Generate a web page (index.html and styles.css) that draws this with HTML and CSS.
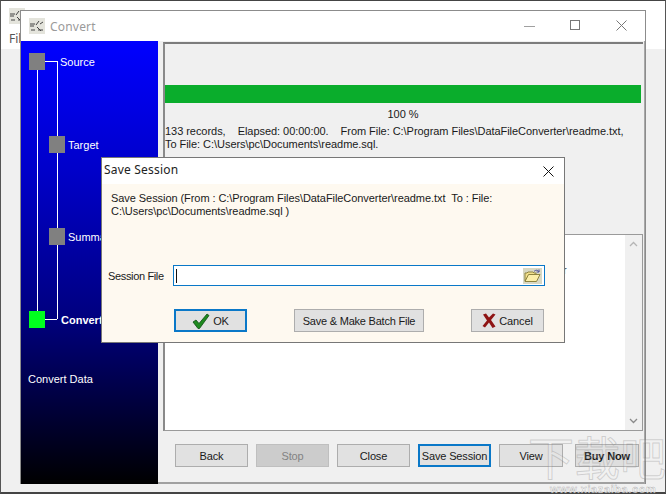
FILE: index.html
```html
<!DOCTYPE html>
<html lang="en">
<head>
<meta charset="utf-8">
<title>Convert</title>
<link rel="stylesheet" href="styles.css">
</head>
<body>
<div class="desktop">
  <div class="main-window">
    <div class="main-head">
      <svg class="app-icon main-icon" viewBox="0 0 16 16"><rect width="16" height="16" fill="#e4e4dc"/><path d="M1 6h5M1 8h4M10 3l-3 4M11 6l3-2M2 12h4M9 12h5M8 9l4 4" stroke="#444" fill="none"/></svg>
      <div class="main-menu">File</div>
    </div>
  </div>

  <div class="convert-window">
    <div class="titlebar">
      <svg class="app-icon" viewBox="0 0 16 16"><rect width="16" height="16" fill="#e4e4dc"/><path d="M1 6h5M1 8h4M10 3l-3 4M11 6l3-2M2 12h4M9 12h5M8 9l4 4" stroke="#444" fill="none"/></svg>
      <span class="title-text">Convert</span>
      <div class="caption-buttons">
        <svg class="caption-icon" viewBox="0 0 12 12"><path d="M0 6.5h11" stroke="#a0a0a0"/></svg>
        <svg class="caption-icon" viewBox="0 0 12 12"><rect x=".5" y=".5" width="9" height="9" fill="none" stroke="#777"/></svg>
        <svg class="caption-icon" viewBox="0 0 12 12"><path d="M.5.5l10 10M10.500.5l-10 10" stroke="#777" fill="none"/></svg>
      </div>
    </div>
    <div class="convert-body">
      <aside class="rail">
        <div class="rail-line line-outer"></div>
        <div class="rail-line line-inner"></div>
        <div class="rail-tick tick-top"></div>
        <div class="rail-tick tick-bottom"></div>
        <div class="step step-source"><i class="node"></i><span>Source</span></div>
        <div class="step step-target"><i class="node"></i><span>Target</span></div>
        <div class="step step-summary"><i class="node"></i><span>Summary</span></div>
        <div class="step step-convert"><i class="node node-active"></i><span>Convert</span></div>
        <div class="rail-caption">Convert Data</div>
      </aside>
      <main class="content">
        <section class="status">
          <div class="progress"></div>
          <div class="percent">100 %</div>
          <div class="status-text">133 records, &nbsp;&nbsp; Elapsed: 00:00:00. &nbsp;&nbsp; From File: C:\Program Files\DataFileConverter\readme.txt,<br>To File: C:\Users\pc\Documents\readme.sql.</div>
        </section>
        <section class="log">
          <div class="log-text">r</div>
          <div class="scrollbar">
            <svg class="scroll-arrow" viewBox="0 0 9 6"><path d="M1 5l3.500-3.500L8 5" fill="none" stroke="#b5b5b5" stroke-width="1.300"/></svg>
            <svg class="scroll-arrow" viewBox="0 0 9 6"><path d="M1 1l3.500 3.500L8 1" fill="none" stroke="#8a8a8a" stroke-width="1.300"/></svg>
          </div>
        </section>
        <footer class="actions">
          <button class="btn">Back</button>
          <button class="btn btn-disabled">Stop</button>
          <button class="btn">Close</button>
          <button class="btn btn-default">Save Session</button>
          <button class="btn btn-view">View</button>
          <button class="btn btn-buy">Buy Now</button>
        </footer>
      </main>
    </div>
  </div>

  <div class="dialog">
    <div class="dialog-title">
      <span>Save Session</span>
      <svg class="dialog-close" viewBox="0 0 11 11"><path d="M.5.500l10 10M10.500.500l-10 10" stroke="#111" fill="none"/></svg>
    </div>
    <div class="dialog-body">
      <p class="dialog-message">Save Session (From : C:\Program Files\DataFileConverter\readme.txt &nbsp;To : File:<br>C:\Users\pc\Documents\readme.sql )</p>
      <div class="file-row">
        <label class="file-label">Session File</label>
        <div class="file-input">
          <i class="caret"></i>
          <span class="browse">
            <svg viewBox="0 0 19 16" width="19" height="16"><rect width="19" height="16" fill="#d8d8c4"/><path d="M2 13V5h2l1-1h5l1 1h2v2H6z" fill="#f3e08c" stroke="#8d8340"/><path d="M2 13.500l3.500-7H17l-3.500 7z" fill="#fbeea8" stroke="#8d8340"/><path d="M11 3.500c2-2 4-1.500 5 .5M16 1.500V4h-2.500" fill="none" stroke="#4a4a9a"/></svg>
          </span>
        </div>
      </div>
      <div class="dialog-actions">
        <button class="btn btn-default btn-icon">
          <svg viewBox="0 0 18 16" width="18" height="16"><path d="M1 9l3-2 3 3.500L15 1l2 1.500L7.500 15.500h-1.500z" fill="#1f8a1f" stroke="#0c4d12" stroke-width=".8"/></svg>
          <span>OK</span>
        </button>
        <button class="btn btn-batch">Save &amp; Make Batch File</button>
        <button class="btn btn-icon">
          <svg viewBox="0 0 14 15" width="14" height="15"><path d="M1 1.500L4 .5l3 4 4-4 2.500 1-4.500 5.500 4.500 6.500-3 1.500L7 9.500l-4 5L.5 13 5 7.500z" fill="#8e1414"/></svg>
          <span>Cancel</span>
        </button>
      </div>
    </div>
  </div>

  <div class="watermark" aria-hidden="true">
    <span class="wm-logo">下载吧</span>
    <span class="wm-url">www.xiazaiba.com</span>
  </div>
</div>
</body>
</html>
```

FILE: styles.css
```css
* { box-sizing: border-box; }
html, body { margin: 0; padding: 0; }
body {
  width: 666px;
  height: 494px;
  overflow: hidden;
  font-family: "Liberation Sans", "Noto Sans", sans-serif;
  font-size: 11px;
  color: #1a1a1a;
}
.desktop { position: relative; width: 666px; height: 494px; background: #fff; overflow: hidden; }

.main-window {
  position: absolute;
  inset: 0;
  background: #f0f0f0;
  border-top: 1px solid #444;
  border-left: 1px solid #555;
  border-right: 1px solid #555;
  border-bottom: 2px solid #444;
}
.main-head { height: 48px; background: #fff; padding: 7px 0 0 8px; }
.main-icon { display: block; }
.main-menu { margin-top: 8px; font-family: "Noto Sans", sans-serif; font-size: 12px; color: #555; line-height: 14px; }
.app-icon { width: 16px; height: 16px; flex: none; }

.convert-window {
  position: absolute;
  left: 20px;
  top: 10px;
  width: 626px;
  height: 474px;
  background: #f0f0f0;
  border: 1px solid #8c8c8c;
  border-bottom: 0;
  display: flex;
  flex-direction: column;
}
.titlebar { height: 30px; flex: none; background: #fff; display: flex; align-items: center; padding-left: 8px; }
.title-text { margin-left: 5px; font-family: "Noto Sans", sans-serif; font-size: 12px; letter-spacing: .2px; color: #9a9a9a; }
.caption-buttons { margin-left: auto; display: flex; gap: 34px; padding-right: 17px; }
.caption-icon { width: 12px; height: 12px; display: block; }

.convert-body { flex: 1; display: flex; min-height: 0; }
.rail {
  position: relative;
  width: 137px;
  flex: none;
  background: linear-gradient(#0000ff 0%, #0000c8 30%, #000080 62%, #000 100%);
  color: #fff;
}
.rail-line { position: absolute; width: 1px; background: #fff; }
.line-outer { left: 16px; top: 28px; height: 245px; }
.line-inner { left: 36px; top: 20px; height: 258px; }
.rail-tick { position: absolute; left: 24px; width: 12px; height: 1px; background: #fff; }
.tick-top { top: 20px; }
.tick-bottom { top: 278px; }
.step { position: absolute; display: flex; align-items: center; height: 17px; line-height: 15px; }
.step span { margin-top: 2px; }
.node { display: block; width: 16px; height: 17px; background: #808080; flex: none; }
.node-active { background: #00ff1e; }
.step-source { left: 8px; top: 12px; gap: 15px; }
.step-target { left: 28px; top: 95px; gap: 3px; }
.step-summary { left: 28px; top: 187px; gap: 3px; }
.step-convert { left: 8px; top: 270px; gap: 16px; font-weight: 700; }
.rail-caption { position: absolute; left: 7px; top: 330px; line-height: 16px; }

.content {
  flex: 1;
  display: flex;
  flex-direction: column;
  min-width: 0;
  padding: 1px 1px 0 5px;
  border-right: 1px solid #a8a8a8;
  border-bottom: 2px solid #a0a0a0;
}
.status { height: 192px; flex: none; border-top: 2px solid #7c7c7c; border-left: 2px solid #8a8a8a; padding: 41px 2px 0 0; }
.progress { height: 18px; background: #0aad2c; }
.percent { text-align: center; line-height: 15px; margin-top: 4px; }
.status-text { line-height: 13px; margin-top: 3px; white-space: nowrap; letter-spacing: -.045px; }

.log {
  height: 197px;
  flex: none;
  display: flex;
  background: #fff;
  border: 1px solid #9a9a9a;
  border-left-width: 2px;
  border-left-color: #8a8a8a;
}
.log-text { flex: 1; padding: 28px 0 0 398px; line-height: 14px; color: #333; }
.scrollbar { width: 17px; background: #f0f0f0; display: flex; flex-direction: column; justify-content: space-between; align-items: center; padding: 6px 0; }
.scroll-arrow { width: 9px; height: 6px; display: block; }

.actions { flex: 1; display: flex; align-items: flex-start; padding: 13px 0 0 12px; gap: 8px; }

.btn {
  width: 73px;
  height: 23px;
  padding: 0;
  border: 1px solid #adadad;
  background: #e1e1e1;
  font: inherit;
  letter-spacing: -.15px;
  color: #1a1a1a;
  white-space: nowrap;
  display: inline-flex;
  align-items: center;
  justify-content: center;
  flex: none;
}
.btn-disabled { background: #cccccc; border-color: #bfbfbf; color: #838383; }
.btn-default { border: 2px solid #0a78c8; }
.btn-view { width: 64px; margin-right: 4px; }
.btn-buy { width: 64px; font-weight: 700; background: #dedede; }
.btn-batch { width: 130px; letter-spacing: -.22px; }
.btn-icon { gap: 3px; }

.dialog {
  position: absolute;
  left: 101px;
  top: 157px;
  width: 464px;
  height: 186px;
  background: #fef9f0;
  border: 1px solid #777;
  display: flex;
  flex-direction: column;
}
.dialog-title {
  height: 26px;
  flex: none;
  background: #fff;
  display: flex;
  align-items: center;
  justify-content: space-between;
  padding: 0 10px 4px 2px;
  font-family: "Noto Sans", sans-serif;
  font-size: 12px;
  letter-spacing: .2px;
  color: #222;
}
.dialog-close { width: 11px; height: 11px; display: block; margin-top: 4px; }
.dialog-body { flex: 1; display: flex; flex-direction: column; padding: 8px 19px 0 6px; }
.dialog-message { margin: 0 0 0 3px; line-height: 13px; height: 73px; white-space: nowrap; letter-spacing: -.065px; }
.file-row { display: flex; align-items: center; height: 21px; }
.file-label { width: 65px; flex: none; letter-spacing: -.35px; }
.file-input {
  flex: 1;
  height: 21px;
  background: #fff;
  border: 1px solid #0a78c8;
  display: flex;
  align-items: center;
  justify-content: space-between;
  padding: 0 2px 0 2px;
}
.caret { width: 1px; height: 14px; background: #111; display: block; }
.browse { display: block; height: 16px; }
.browse svg { display: block; }
.dialog-actions { display: flex; margin-top: 23px; padding-left: 66px; gap: 47px; }

.watermark {
  position: absolute;
  left: 528px;
  top: 428px;
  width: 138px;
  height: 66px;
  display: flex;
  flex-direction: column;
  overflow: hidden;
  pointer-events: none;
}
.wm-logo {
  font-family: "Noto Sans CJK SC", sans-serif;
  font-size: 46px;
  line-height: 54px;
  height: 56px;
  white-space: nowrap;
  color: rgba(255, 255, 255, .15);
  -webkit-text-stroke: 1px rgba(120, 120, 120, .28);
}
.wm-url {
  font-family: "Liberation Sans", sans-serif;
  font-weight: 700;
  font-size: 11px;
  line-height: 10px;
  padding-left: 22px;
  letter-spacing: .6px;
  white-space: nowrap;
  color: rgba(255, 255, 255, .7);
  -webkit-text-stroke: .4px rgba(120, 120, 120, .6);
}
```
